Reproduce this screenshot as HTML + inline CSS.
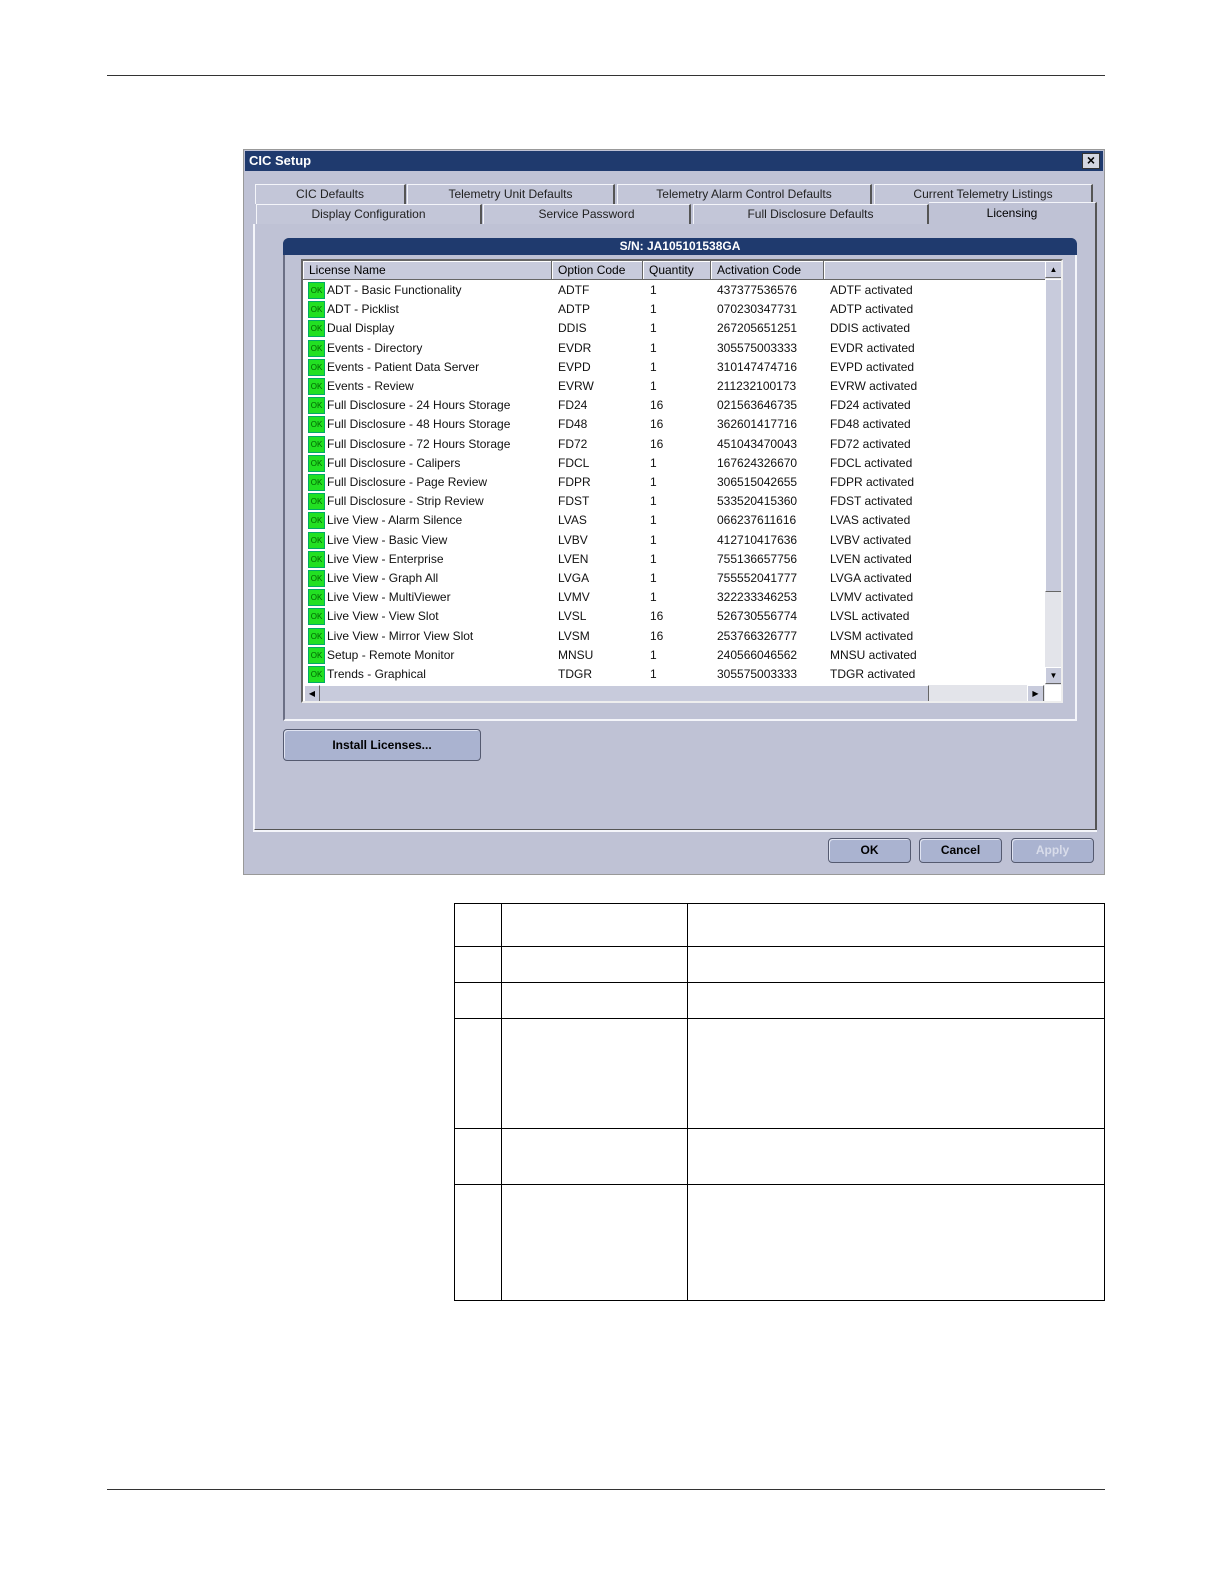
<!DOCTYPE html>
<html><head><meta charset="utf-8"><style>
*{margin:0;padding:0;box-sizing:border-box}
body{width:1224px;height:1584px;background:#fff;position:relative;font-family:"Liberation Sans",sans-serif;overflow:hidden}
.a{position:absolute}
.tab{position:absolute;background:#c3c6d8;border:1px solid #f4f5fa;border-right:2px solid #555;border-bottom:none;font-size:12px;text-align:center;color:#222;line-height:18px}
.r{position:absolute;left:0;height:19px;font-size:12px;line-height:19px;color:#111;width:740px}
.r span{position:absolute}
.ic{position:absolute;left:5px;top:1px;width:17px;height:17px;background:#22e022;border:1px solid #0a6;font-size:8px;line-height:15px;color:#060;text-align:center}
.btn{position:absolute;background:#aab3d0;border:1px solid #555a70;border-radius:4px;font-weight:bold;font-size:12px;text-align:center;box-shadow:inset 1px 1px 0 #e0e4f2}
.hd{position:absolute;top:0;height:19px;border-right:1px solid #666;border-bottom:1px solid #666;font-size:12px;line-height:19px;padding-left:6px;background:#c8cbdc;box-shadow:inset 1px 1px 0 #fff}
</style></head><body>
<div class="a" style="left:107px;top:75px;width:998px;height:1px;background:#333"></div>
<div class="a" style="left:107px;top:1489px;width:998px;height:1px;background:#333"></div>

<div class="a" style="left:243px;top:149px;width:862px;height:726px;background:#bfc2d5;border:1px solid #999"></div>
<div class="a" style="left:245px;top:151px;width:858px;height:20px;background:#1f3a6e;color:#fff;font-weight:bold;font-size:13px;line-height:20px;padding-left:4px">CIC Setup</div>
<div class="a" style="left:1082px;top:153px;width:18px;height:16px;background:#d4d6e0;border:1px solid #333;font-size:14px;line-height:13px;text-align:center;font-weight:bold">×</div>

<div class="tab" style="left:255px;top:184px;width:151px;height:20px">CIC Defaults</div>
<div class="tab" style="left:407px;top:184px;width:208px;height:20px">Telemetry Unit Defaults</div>
<div class="tab" style="left:617px;top:184px;width:255px;height:20px">Telemetry Alarm Control Defaults</div>
<div class="tab" style="left:874px;top:184px;width:219px;height:20px">Current Telemetry Listings</div>
<div class="tab" style="left:256px;top:204px;width:226px;height:21px">Display Configuration</div>
<div class="tab" style="left:483px;top:204px;width:208px;height:21px">Service Password</div>
<div class="tab" style="left:693px;top:204px;width:236px;height:21px">Full Disclosure Defaults</div>
<div class="a" style="left:253px;top:224px;width:844px;height:607px;background:#bfc2d5;border-left:2px solid #f4f5fa;border-right:2px solid #555;border-bottom:2px solid #555"></div>
<div class="a" style="left:929px;top:202px;width:168px;height:24px;background:#bfc2d5;border-top:1px solid #f4f5fa;border-right:2px solid #555;font-size:12px;text-align:center;line-height:20px">Licensing</div>
<div class="a" style="left:253px;top:830px;width:844px;height:2px;background:#f4f5fa"></div>

<div class="a" style="left:283px;top:238px;width:794px;height:483px;border:2px solid #6b6f85;border-right-color:#f4f5fa;border-bottom-color:#f4f5fa;border-radius:6px 6px 0 0;background:#bfc2d5"></div>
<div class="a" style="left:283px;top:238px;width:794px;height:17px;background:#1f3a6e;border-radius:6px 6px 0 0;color:#fff;font-weight:bold;font-size:12px;text-align:center;line-height:17px">S/N: JA105101538GA</div>

<div class="a" style="left:301px;top:259px;width:762px;height:444px;background:#fff;border:2px solid #666;border-right-color:#eee;border-bottom-color:#eee;overflow:hidden">
 <div class="hd" style="left:0;width:249px">License Name</div>
 <div class="hd" style="left:249px;width:91px">Option Code</div>
 <div class="hd" style="left:340px;width:68px">Quantity</div>
 <div class="hd" style="left:408px;width:113px">Activation Code</div>
 <div class="hd" style="left:521px;width:222px"></div>
 <div class="a" style="left:742px;top:0;width:17px;height:424px;background:#e3e4ea"></div>
 <div class="a" style="left:742px;top:0;width:17px;height:17px;background:#c8cbdc;border:1px solid #666;border-top-color:#fff;border-left-color:#fff;font-size:8px;text-align:center;line-height:15px">▲</div>
 <div class="a" style="left:742px;top:18px;width:17px;height:313px;background:#c8cbdc;border:1px solid #666;border-top-color:#fff;border-left-color:#fff"></div>
 <div class="a" style="left:742px;top:406px;width:17px;height:17px;background:#c8cbdc;border:1px solid #666;border-top-color:#fff;border-left-color:#fff;font-size:8px;text-align:center;line-height:15px">▼</div>
 <div class="a" style="left:0;top:424px;width:742px;height:17px;background:#e3e4ea"></div>
 <div class="a" style="left:0;top:424px;width:626px;height:17px;background:#c8cbdc;border:1px solid #666;border-top-color:#fff;border-left-color:#fff"></div>
 <div class="a" style="left:1px;top:424px;width:16px;height:17px;background:#c8cbdc;border:1px solid #666;border-top-color:#fff;border-left-color:#fff;font-size:8px;text-align:center;line-height:15px">◀</div>
 <div class="a" style="left:724px;top:424px;width:17px;height:17px;background:#c8cbdc;border:1px solid #666;border-top-color:#fff;border-left-color:#fff;font-size:8px;text-align:center;line-height:15px">▶</div>
 <div id="rows" class="a" style="left:0;top:20px;width:742px"></div>
</div>

<div class="btn" style="left:283px;top:729px;width:198px;height:32px;line-height:30px">Install Licenses...</div>
<div class="btn" style="left:828px;top:838px;width:83px;height:25px;line-height:23px">OK</div>
<div class="btn" style="left:919px;top:838px;width:83px;height:25px;line-height:23px">Cancel</div>
<div class="btn" style="left:1011px;top:838px;width:83px;height:25px;line-height:23px;color:#d8dcea">Apply</div>

<div class="a" style="left:454px;top:903px;width:651px;height:398px;border:1px solid #000"></div>
<div class="a" style="left:501px;top:903px;width:1px;height:398px;background:#000"></div>
<div class="a" style="left:687px;top:903px;width:1px;height:398px;background:#000"></div>
<div class="a" style="left:454px;top:946px;width:651px;height:1px;background:#000"></div>
<div class="a" style="left:454px;top:982px;width:651px;height:1px;background:#000"></div>
<div class="a" style="left:454px;top:1018px;width:651px;height:1px;background:#000"></div>
<div class="a" style="left:454px;top:1128px;width:651px;height:1px;background:#000"></div>
<div class="a" style="left:454px;top:1184px;width:651px;height:1px;background:#000"></div>

<script>
var d=[["ADT - Basic Functionality","ADTF","1","437377536576"],["ADT - Picklist","ADTP","1","070230347731"],["Dual Display","DDIS","1","267205651251"],["Events - Directory","EVDR","1","305575003333"],["Events - Patient Data Server","EVPD","1","310147474716"],["Events - Review","EVRW","1","211232100173"],["Full Disclosure - 24 Hours Storage","FD24","16","021563646735"],["Full Disclosure - 48 Hours Storage","FD48","16","362601417716"],["Full Disclosure - 72 Hours Storage","FD72","16","451043470043"],["Full Disclosure - Calipers","FDCL","1","167624326670"],["Full Disclosure - Page Review","FDPR","1","306515042655"],["Full Disclosure - Strip Review","FDST","1","533520415360"],["Live View - Alarm Silence","LVAS","1","066237611616"],["Live View - Basic View","LVBV","1","412710417636"],["Live View - Enterprise","LVEN","1","755136657756"],["Live View - Graph All","LVGA","1","755552041777"],["Live View - MultiViewer","LVMV","1","322233346253"],["Live View - View Slot","LVSL","16","526730556774"],["Live View - Mirror View Slot","LVSM","16","253766326777"],["Setup - Remote Monitor","MNSU","1","240566046562"],["Trends - Graphical","TDGR","1","305575003333"]];
var h="";d.forEach(function(r,i){h+='<div class="r" style="top:'+(i*19.2).toFixed(1)+'px"><div class="ic">OK</div><span style="left:24px">'+r[0]+'</span><span style="left:255px">'+r[1]+'</span><span style="left:347px">'+r[2]+'</span><span style="left:414px">'+r[3]+'</span><span style="left:527px">'+r[1]+' activated</span></div>'});
document.getElementById("rows").innerHTML=h;
</script>
</body></html>
